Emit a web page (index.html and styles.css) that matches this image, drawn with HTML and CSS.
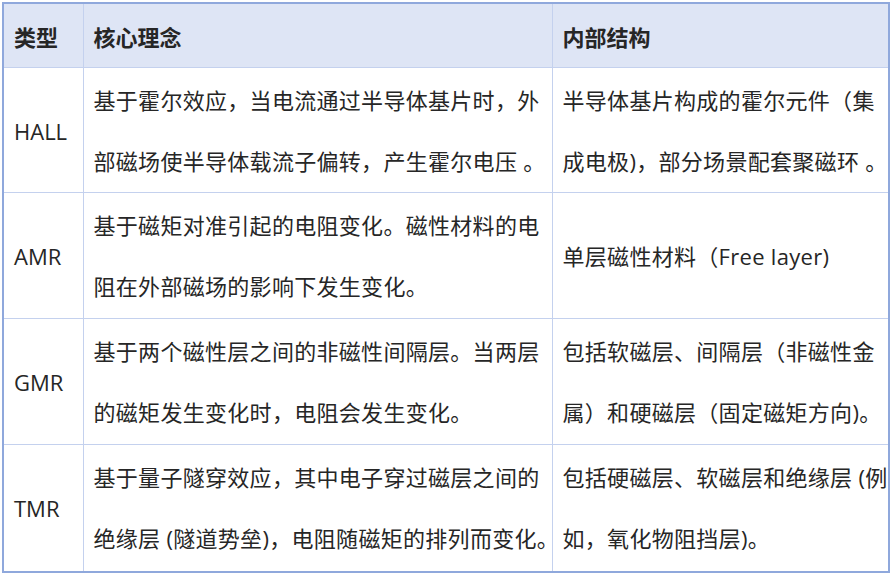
FILE: index.html
```html
<!DOCTYPE html>
<html lang="zh-CN">
<head>
<meta charset="utf-8">
<link rel="stylesheet" href="styles.css">
</head>
<body>
<table class="grid">
  <colgroup>
    <col class="c1"><col class="c2"><col class="c3">
  </colgroup>
  <thead>
    <tr class="head">
      <th>类型</th>
      <th>核心理念</th>
      <th>内部结构</th>
    </tr>
  </thead>
  <tbody>
    <tr class="r1">
      <td class="type">HALL</td>
      <td>基于霍尔效应，当电流通过半导体基片时，外<br>部磁场使半导体载流子偏转，产生霍尔电压 。</td>
      <td>半导体基片构成的霍尔元件（集<br>成电极)，部分场景配套聚磁环 。</td>
    </tr>
    <tr class="r2">
      <td class="type">AMR</td>
      <td>基于磁矩对准引起的电阻变化。磁性材料的电<br>阻在外部磁场的影响下发生变化。</td>
      <td>单层磁性材料（Free layer)</td>
    </tr>
    <tr class="r3">
      <td class="type">GMR</td>
      <td>基于两个磁性层之间的非磁性间隔层。当两层<br>的磁矩发生变化时，电阻会发生变化。</td>
      <td>包括软磁层、间隔层（非磁性金<br>属）和硬磁层（固定磁矩方向)。</td>
    </tr>
    <tr class="r4">
      <td class="type">TMR</td>
      <td>基于量子隧穿效应，其中电子穿过磁层之间的<br>绝缘层 (隧道势垒)，电阻随磁矩的排列而变化。</td>
      <td>包括硬磁层、软磁层和绝缘层 (例<br>如，氧化物阻挡层)。</td>
    </tr>
  </tbody>
</table>
</body>
</html>
```

FILE: styles.css
```css
html, body {
  margin: 0;
  padding: 0;
  background: #ffffff;
}
body {
  padding: 2px 2px 0 2px;
  font-family: "Open Sans", "Noto Sans CJK SC", sans-serif;
  color: #262626;
}
.grid {
  border-collapse: collapse;
  width: 886px;
  table-layout: fixed;
  border: 2px solid #8fa8dc;
}
.c1 { width: 80px; }
.c2 { width: 469px; }
.c3 { width: 337px; }
.grid th,
.grid td {
  border: 1px solid #c4d1ee;
  padding: 0 4px 0 10px;
  text-align: left;
  vertical-align: middle;
  font-size: 22px;
  white-space: nowrap;
}
.grid th {
  background: #dee5f5;
  font-weight: bold;
  height: 61px;
  line-height: 61px;
  font-family: "Noto Sans CJK SC", sans-serif;
  padding-top: 2px;
}
.grid td {
  font-family: "Open Sans", "Noto Sans CJK SC", sans-serif;
  line-height: 61px;
  padding-top: 2px;
  letter-spacing: 0.3px;
}
.r2 td,
.r3 td { padding-bottom: 1px; }
.r4 td { padding-bottom: 2px; }
.grid td.type {
  font-size: 22px;
  letter-spacing: 0;
}
```
